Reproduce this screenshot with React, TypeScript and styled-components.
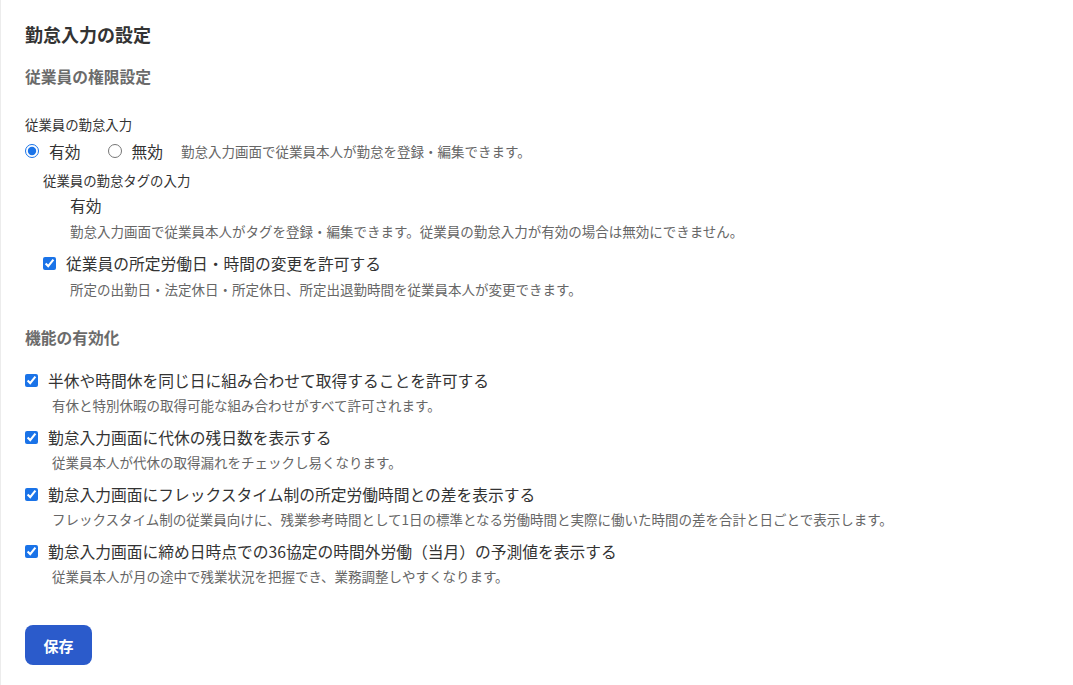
import React from "react";
import styled, { createGlobalStyle } from "styled-components";

const GlobalStyle = createGlobalStyle`
  body {
    margin: 0;
    background: #fff;
    font-family: "Noto Sans CJK JP", "Noto Sans", sans-serif;
    color: #333;
  }
`;

// Whole settings panel
const Page = styled.div`
  min-height: 685px;
  box-sizing: border-box;
  padding: 22px 24px;
  border-left: 1px solid #ececec;
`;

const Title = styled.h2`
  margin: 0;
  font-size: 18px;
  line-height: 24px;
  font-weight: 700;
  color: #333;
`;

// Gray bold section heading
const SectionHeading = styled.h3<{ $mt: number }>`
  margin: ${(p) => p.$mt}px 0 0;
  font-size: 15.75px;
  line-height: 22px;
  font-weight: 700;
  color: #6b6b6b;
`;

const FieldLabel = styled.div<{ $mt: number; $indent?: number }>`
  margin-top: ${(p) => p.$mt}px;
  padding-left: ${(p) => p.$indent || 0}px;
  font-size: 13.4px;
  line-height: 20px;
  color: #333;
`;

const RadioRow = styled.div`
  margin-top: 5px;
  display: flex;
  align-items: center;
  height: 24px;
`;

const RadioOption = styled.label`
  display: flex;
  align-items: center;
  gap: 10px;
  margin-right: 27px;
  font-size: 15.75px;
  color: #333;
  &:last-of-type {
    margin-right: 18px;
  }
`;

const Radio = styled.input.attrs({ type: "radio" })`
  margin: 0;
  width: 14px;
  height: 14px;
  accent-color: #1a73e8;
`;

const InlineNote = styled.span`
  font-size: 13.5px;
  color: #666;
`;

const Value = styled.div`
  margin-top: 5px;
  padding-left: 45px;
  font-size: 15.75px;
  line-height: 22px;
  color: #333;
`;

const Description = styled.div<{ $indent: number; $mt?: number }>`
  margin-top: ${(p) => (p.$mt === undefined ? 3 : p.$mt)}px;
  padding-left: ${(p) => p.$indent}px;
  font-size: 13.5px;
  line-height: 20px;
  color: #666;
`;

// One checkbox setting with its explanation below
const CheckItem = styled.div<{ $indent?: number; $mt: number }>`
  margin-top: ${(p) => p.$mt}px;
  padding-left: ${(p) => p.$indent || 0}px;
`;

const CheckLabel = styled.label`
  display: flex;
  align-items: center;
  gap: 10px;
  height: 24px;
  font-size: 15.75px;
  color: #333;
`;

const Checkbox = styled.input.attrs({ type: "checkbox" })`
  margin: 0;
  width: 13px;
  height: 13px;
  accent-color: #1a73e8;
`;

const SaveButton = styled.button`
  margin-top: 39px;
  width: 67px;
  height: 40px;
  border: none;
  border-radius: 8px;
  background: #2b5bcb;
  color: #fff;
  font-family: "Noto Sans CJK JP", sans-serif;
  font-size: 15px;
  font-weight: 700;
  cursor: pointer;
`;

const features = [
  {
    label: "半休や時間休を同じ日に組み合わせて取得することを許可する",
    desc: "有休と特別休暇の取得可能な組み合わせがすべて許可されます。",
  },
  {
    label: "勤怠入力画面に代休の残日数を表示する",
    desc: "従業員本人が代休の取得漏れをチェックし易くなります。",
  },
  {
    label: "勤怠入力画面にフレックスタイム制の所定労働時間との差を表示する",
    desc: "フレックスタイム制の従業員向けに、残業参考時間として1日の標準となる労働時間と実際に働いた時間の差を合計と日ごとで表示します。",
  },
  {
    label: "勤怠入力画面に締め日時点での36協定の時間外労働（当月）の予測値を表示する",
    desc: "従業員本人が月の途中で残業状況を把握でき、業務調整しやすくなります。",
  },
];

const App = () => {
  return (
    <Page>
      <GlobalStyle />
      <Title>勤怠入力の設定</Title>

      <SectionHeading $mt={20}>従業員の権限設定</SectionHeading>
      <FieldLabel $mt={26}>従業員の勤怠入力</FieldLabel>
      <RadioRow>
        <RadioOption>
          <Radio name="input" defaultChecked />
          有効
        </RadioOption>
        <RadioOption>
          <Radio name="input" />
          無効
        </RadioOption>
        <InlineNote>勤怠入力画面で従業員本人が勤怠を登録・編集できます。</InlineNote>
      </RadioRow>

      <FieldLabel $mt={7} $indent={18}>
        従業員の勤怠タグの入力
      </FieldLabel>
      <Value>有効</Value>
      <Description $indent={45} $mt={4}>
        勤怠入力画面で従業員本人がタグを登録・編集できます。従業員の勤怠入力が有効の場合は無効にできません。
      </Description>

      <CheckItem $indent={18} $mt={10}>
        <CheckLabel>
          <Checkbox defaultChecked />
          従業員の所定労働日・時間の変更を許可する
        </CheckLabel>
        <Description $indent={27} $mt={4}>
          所定の出勤日・法定休日・所定休日、所定出退勤時間を従業員本人が変更できます。
        </Description>
      </CheckItem>

      <SectionHeading $mt={28}>機能の有効化</SectionHeading>
      {features.map((f, i) => (
        <CheckItem key={f.label} $mt={i === 0 ? 19 : 10}>
          <CheckLabel>
            <Checkbox defaultChecked />
            {f.label}
          </CheckLabel>
          <Description $indent={27}>{f.desc}</Description>
        </CheckItem>
      ))}

      <SaveButton>保存</SaveButton>
    </Page>
  );
};

export default App;
